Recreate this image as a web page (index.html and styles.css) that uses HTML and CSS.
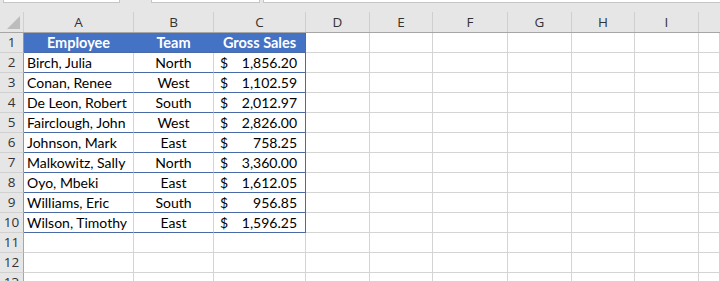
FILE: index.html
```html
<!DOCTYPE html>
<html>
<head>
<meta charset="utf-8">
<link rel="stylesheet" href="styles.css">
</head>
<body>
<div class="sheet">
  <div class="topbar">
    <div class="box b1"></div>
    <div class="box b2"></div>
    <div class="box b3"></div>
  </div>
  <div class="row colhead">
    <div class="corner"><span class="tri"></span></div>
    <div class="ch">A</div><div class="ch">B</div><div class="ch">C</div><div class="ch">D</div><div class="ch">E</div><div class="ch">F</div><div class="ch">G</div><div class="ch">H</div><div class="ch">I</div><div class="ch last"></div>
  </div>

  <div class="row trow">
    <div class="rh">1</div>
    <div class="c th">Employee</div><div class="c th">Team</div><div class="c th tr">Gross Sales</div>
    <div class="c"></div><div class="c"></div><div class="c"></div><div class="c"></div><div class="c"></div><div class="c"></div><div class="c"></div>
  </div>
  <div class="row trow">
    <div class="rh">2</div>
    <div class="c td">Birch, Julia</div><div class="c td ctr">North</div><div class="c td money tr"><span>$</span><span>1,856.20</span></div>
    <div class="c"></div><div class="c"></div><div class="c"></div><div class="c"></div><div class="c"></div><div class="c"></div><div class="c"></div>
  </div>
  <div class="row trow">
    <div class="rh">3</div>
    <div class="c td">Conan, Renee</div><div class="c td ctr">West</div><div class="c td money tr"><span>$</span><span>1,102.59</span></div>
    <div class="c"></div><div class="c"></div><div class="c"></div><div class="c"></div><div class="c"></div><div class="c"></div><div class="c"></div>
  </div>
  <div class="row trow">
    <div class="rh">4</div>
    <div class="c td">De Leon, Robert</div><div class="c td ctr">South</div><div class="c td money tr"><span>$</span><span>2,012.97</span></div>
    <div class="c"></div><div class="c"></div><div class="c"></div><div class="c"></div><div class="c"></div><div class="c"></div><div class="c"></div>
  </div>
  <div class="row trow">
    <div class="rh">5</div>
    <div class="c td">Fairclough, John</div><div class="c td ctr">West</div><div class="c td money tr"><span>$</span><span>2,826.00</span></div>
    <div class="c"></div><div class="c"></div><div class="c"></div><div class="c"></div><div class="c"></div><div class="c"></div><div class="c"></div>
  </div>
  <div class="row trow">
    <div class="rh">6</div>
    <div class="c td">Johnson, Mark</div><div class="c td ctr">East</div><div class="c td money tr"><span>$</span><span>758.25</span></div>
    <div class="c"></div><div class="c"></div><div class="c"></div><div class="c"></div><div class="c"></div><div class="c"></div><div class="c"></div>
  </div>
  <div class="row trow">
    <div class="rh">7</div>
    <div class="c td">Malkowitz, Sally</div><div class="c td ctr">North</div><div class="c td money tr"><span>$</span><span>3,360.00</span></div>
    <div class="c"></div><div class="c"></div><div class="c"></div><div class="c"></div><div class="c"></div><div class="c"></div><div class="c"></div>
  </div>
  <div class="row trow">
    <div class="rh">8</div>
    <div class="c td">Oyo, Mbeki</div><div class="c td ctr">East</div><div class="c td money tr"><span>$</span><span>1,612.05</span></div>
    <div class="c"></div><div class="c"></div><div class="c"></div><div class="c"></div><div class="c"></div><div class="c"></div><div class="c"></div>
  </div>
  <div class="row trow">
    <div class="rh">9</div>
    <div class="c td">Williams, Eric</div><div class="c td ctr">South</div><div class="c td money tr"><span>$</span><span>956.85</span></div>
    <div class="c"></div><div class="c"></div><div class="c"></div><div class="c"></div><div class="c"></div><div class="c"></div><div class="c"></div>
  </div>
  <div class="row trow">
    <div class="rh">10</div>
    <div class="c td">Wilson, Timothy</div><div class="c td ctr">East</div><div class="c td money tr"><span>$</span><span>1,596.25</span></div>
    <div class="c"></div><div class="c"></div><div class="c"></div><div class="c"></div><div class="c"></div><div class="c"></div><div class="c"></div>
  </div>
  <div class="row">
    <div class="rh">11</div>
    <div class="c"></div><div class="c"></div><div class="c"></div><div class="c"></div><div class="c"></div><div class="c"></div><div class="c"></div><div class="c"></div><div class="c"></div><div class="c"></div>
  </div>
  <div class="row">
    <div class="rh">12</div>
    <div class="c"></div><div class="c"></div><div class="c"></div><div class="c"></div><div class="c"></div><div class="c"></div><div class="c"></div><div class="c"></div><div class="c"></div><div class="c"></div>
  </div>
  <div class="row">
    <div class="rh">13</div>
    <div class="c"></div><div class="c"></div><div class="c"></div><div class="c"></div><div class="c"></div><div class="c"></div><div class="c"></div><div class="c"></div><div class="c"></div><div class="c"></div>
  </div>
</div>
</body>
</html>
```

FILE: styles.css
```css
html, body {
  margin: 0;
  padding: 0;
  background: #ffffff;
  overflow: hidden;
}
.sheet {
  width: 720px;
  font-family: Lato, "Open Sans", sans-serif;
  font-size: 14px;
  color: #000;
}
.topbar {
  position: relative;
  height: 12px;
  background: #e6e6e6;
}
.box {
  position: absolute;
  top: 0;
  height: 3px;
  background: #ffffff;
  border: 1px solid #c6c6c6;
  border-top: 0;
  box-sizing: border-box;
}
.b1 { left: 3px; width: 117px; }
.b2 { left: 151px; width: 109px; }
.b3 { left: 263px; width: 470px; }

.row {
  display: grid;
  grid-template-columns: 24px 110px 80px 92px 64px 63px 75px 64px 63px 64px 1fr;
  height: 20px;
}
.colhead {
  height: 21px;
  background: #e6e6e6;
  border-bottom: 1px solid #a6a6a6;
  box-sizing: border-box;
}
.corner {
  position: relative;
  border-right: 1px solid #d0d0d0;
}
.tri {
  position: absolute;
  right: 3px;
  bottom: 3px;
  width: 0;
  height: 0;
  border-left: 13px solid transparent;
  border-bottom: 13px solid #bcbcbc;
}
.ch {
  border-right: 1px solid #cfcfcf;
  color: #333;
  text-align: center;
  line-height: 20px;
  font-family: "Open Sans", Lato, sans-serif;
  font-size: 13.5px;
}
.ch.last { border-right: 0; }
.rh {
  background: #e6e6e6;
  border-right: 1px solid #a6a6a6;
  border-bottom: 1px solid #d0d0d0;
  color: #333;
  text-align: center;
  line-height: 19px;
  font-family: "Open Sans", Lato, sans-serif;
  font-size: 13.5px;
  box-sizing: border-box;
}
.trow .rh { border-right-color: #8896b0; }
.c {
  border-right: 1px solid #d4d4d4;
  border-bottom: 1px solid #d4d4d4;
  box-sizing: border-box;
  line-height: 19px;
  white-space: nowrap;
  overflow: hidden;
}
.th {
  background: #4472c4;
  color: #ffffff;
  font-weight: bold;
  font-size: 14.5px;
  text-align: center;
  border-right-color: #4472c4;
  border-bottom-color: #4a6aa6;
}
.td {
  border-bottom-color: #4a6aa6;
  padding-left: 3px;
}
.ctr { text-align: center; padding-left: 0; }
.tr { border-right-color: #4a6aa6; }
.money {
  display: flex;
  justify-content: space-between;
  padding-left: 6px;
  padding-right: 8px;
}
```
